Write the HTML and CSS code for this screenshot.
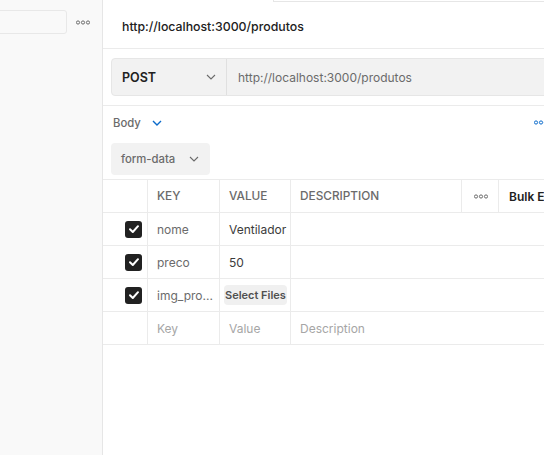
FILE: index.html
```html
<!DOCTYPE html>
<html>
<head>
<meta charset="utf-8">
<link rel="stylesheet" href="styles.css">
</head>
<body>
<div class="sidebar">
  <div class="side-top">
    <div class="search"></div>
    <svg class="dots" width="14" height="5" viewBox="0 0 14 5"><circle cx="2" cy="2.5" r="1.6"/><circle cx="7" cy="2.5" r="1.6"/><circle cx="12" cy="2.5" r="1.6"/></svg>
  </div>
</div>
<div class="main">
  <div class="tabstrip"><div class="tab-active"></div><div class="tab-rest"></div></div>
  <div class="title">http://localhost:3000/produtos</div>
  <div class="urlsec">
    <div class="urlbar">
      <div class="method">POST
        <svg class="chev" width="10" height="6" viewBox="0 0 10 6"><path d="M1 1l4 4 4-4"/></svg>
      </div>
      <div class="url">http://localhost:3000/produtos</div>
    </div>
  </div>
  <div class="bodyrow">
    <span class="bodylbl">Body</span>
    <svg class="chev blue" width="10" height="6" viewBox="0 0 10 6"><path d="M1 1l4 4 4-4"/></svg>
    <svg class="dots bluedots" width="14" height="5" viewBox="0 0 14 5"><circle cx="2" cy="2.5" r="1.6"/><circle cx="7" cy="2.5" r="1.6"/><circle cx="12" cy="2.5" r="1.6"/></svg>
  </div>
  <div class="fdrow">
    <div class="formdata">form-data
      <svg class="chev" width="10" height="6" viewBox="0 0 10 6"><path d="M1 1l4 4 4-4"/></svg>
    </div>
  </div>
  <div class="table">
    <div class="row head">
      <div class="c c0"></div>
      <div class="c c1">KEY</div>
      <div class="c c2">VALUE</div>
      <div class="c c3">DESCRIPTION</div>
      <div class="c c4"><svg class="dots" width="14" height="5" viewBox="0 0 14 5"><circle cx="2" cy="2.5" r="1.6"/><circle cx="7" cy="2.5" r="1.6"/><circle cx="12" cy="2.5" r="1.6"/></svg></div>
      <div class="c c5">Bulk Edit</div>
    </div>
    <div class="row">
      <div class="c c0"><span class="cb"><svg width="12" height="10" viewBox="0 0 12 10"><path d="M2 5.2l2.8 2.8L10 2.2"/></svg></span></div>
      <div class="c c1 key">nome</div>
      <div class="c c2 val">Ventilador</div>
      <div class="c c3"></div>
      <div class="c c4"></div>
      <div class="c c5"></div>
    </div>
    <div class="row">
      <div class="c c0"><span class="cb"><svg width="12" height="10" viewBox="0 0 12 10"><path d="M2 5.2l2.8 2.8L10 2.2"/></svg></span></div>
      <div class="c c1 key">preco</div>
      <div class="c c2 val">50</div>
      <div class="c c3"></div>
      <div class="c c4"></div>
      <div class="c c5"></div>
    </div>
    <div class="row">
      <div class="c c0"><span class="cb"><svg width="12" height="10" viewBox="0 0 12 10"><path d="M2 5.2l2.8 2.8L10 2.2"/></svg></span></div>
      <div class="c c1 key">img_pro...</div>
      <div class="c c2 sfc"><span class="sf">Select Files</span></div>
      <div class="c c3"></div>
      <div class="c c4"></div>
      <div class="c c5"></div>
    </div>
    <div class="row">
      <div class="c c0"></div>
      <div class="c c1 ph">Key</div>
      <div class="c c2 ph">Value</div>
      <div class="c c3 ph">Description</div>
      <div class="c c4"></div>
      <div class="c c5"></div>
    </div>
  </div>
</div>
</body>
</html>
```

FILE: styles.css
```css
html, body {
  margin: 0;
  padding: 0;
}
body {
  display: flex;
  width: 544px;
  height: 455px;
  overflow: hidden;
  font-family: Inter, "Noto Sans", sans-serif;
  color: #212121;
  background: #fff;
}
.sidebar {
  width: 102px;
  flex-shrink: 0;
  background: #f9f9f9;
  border-right: 1px solid #e6e6e6;
}
.side-top {
  display: flex;
  align-items: center;
  padding-top: 10px;
}
.search {
  margin-left: -10px;
  width: 75px;
  height: 22px;
  border: 1px solid #e8e8e8;
  border-radius: 3px;
  background: #f9f9f9;
  flex-shrink: 0;
}
.dots {
  fill: none;
  stroke: #6b6b6b;
  stroke-width: 1;
}
.side-top .dots {
  margin-left: 9px;
}
.main {
  width: 620px;
  flex-shrink: 0;
  display: flex;
  flex-direction: column;
}
.tabstrip {
  display: flex;
  height: 2px;
}
.tab-active {
  width: 170px;
}
.tab-rest {
  flex: 1;
  border-bottom: 1px solid #e6e6e6;
  border-left: 1px solid #e6e6e6;
  height: 1px;
}
.title {
  height: 47px;
  box-sizing: border-box;
  padding-left: 19px;
  padding-top: 3px;
  display: flex;
  align-items: center;
  font-size: 12.3px;
  font-weight: 500;
  border-bottom: 1px solid #ebebeb;
}
.urlsec {
  padding: 9px 0 9px 8px;
  border-bottom: 1px solid #ebebeb;
}
.urlbar {
  display: flex;
  height: 38px;
  box-sizing: border-box;
  background: #f2f2f2;
  border: 1px solid #e6e6e6;
  border-radius: 4px;
}
.method {
  width: 115px;
  box-sizing: border-box;
  padding-left: 10px;
  padding-right: 10px;
  display: flex;
  align-items: center;
  justify-content: space-between;
  font-size: 12.5px;
  font-weight: 600;
  border-right: 1px solid #e0e0e0;
}
.chev {
  fill: none;
  stroke: #6b6b6b;
  stroke-width: 1.1;
}
.chev.blue {
  stroke: #0b6bcb;
  stroke-width: 1.4;
}
.url {
  display: flex;
  align-items: center;
  padding-left: 11px;
  font-size: 12px;
  color: #6b6b6b;
}
.bodyrow {
  height: 33px;
  display: flex;
  align-items: center;
  padding-left: 10px;
}
.bodylbl {
  font-size: 11.3px;
  font-weight: 500;
  color: #6b6b6b;
  margin-right: 11px;
}
.bluedots {
  stroke: #0b6bcb;
  margin-left: 372px;
}
.fdrow {
  padding: 4px 0 4px 8px;
}
.formdata {
  width: 99px;
  height: 32px;
  box-sizing: border-box;
  background: #f2f2f2;
  border-radius: 4px;
  display: flex;
  align-items: center;
  padding-left: 10px;
  gap: 14px;
  font-size: 11.3px;
  font-weight: 500;
  color: #6b6b6b;
}
.table {
  border-top: 1px solid #ebebeb;
}
.row {
  display: flex;
  height: 33px;
  border-bottom: 1px solid #ebebeb;
  box-sizing: border-box;
}
.c {
  display: flex;
  align-items: center;
  box-sizing: border-box;
  padding-left: 9px;
  font-size: 12px;
  white-space: nowrap;
  overflow: hidden;
}
.c0, .c1, .c2 {
  border-right: 1px solid #ebebeb;
}
.head .c3, .head .c4 {
  border-right: 1px solid #ebebeb;
}
.c0 { width: 45px; padding-left: 22px; }
.c1 { width: 72px; }
.c2 { width: 71px; }
.c3 { width: 171px; }
.c4 { width: 37px; padding-left: 12px; }
.c5 { width: 120px; padding-left: 10px; }
.head .c {
  font-size: 11.8px;
  font-weight: 500;
  color: #6b6b6b;
}
.head .c5 {
  color: #212121;
  font-weight: 600;
  font-size: 12px;
}
.key {
  color: #6b6b6b;
}
.val {
  color: #3b3b3b;
  padding-left: 9px;
}
.sfc {
  padding-left: 4px;
}
.sf {
  background: #f0f0f0;
  border-radius: 4px;
  font-size: 11px;
  font-weight: 600;
  color: #505050;
  padding: 4px 1px 4px 1px;
  line-height: 12px;
}
.ph {
  color: #a6a6a6;
}
.cb {
  width: 17px;
  height: 17px;
  border-radius: 3px;
  background: #212121;
  display: flex;
  align-items: center;
  justify-content: center;
}
.cb svg {
  fill: none;
  stroke: #fff;
  stroke-width: 2;
  stroke-linecap: round;
  stroke-linejoin: round;
}
```
